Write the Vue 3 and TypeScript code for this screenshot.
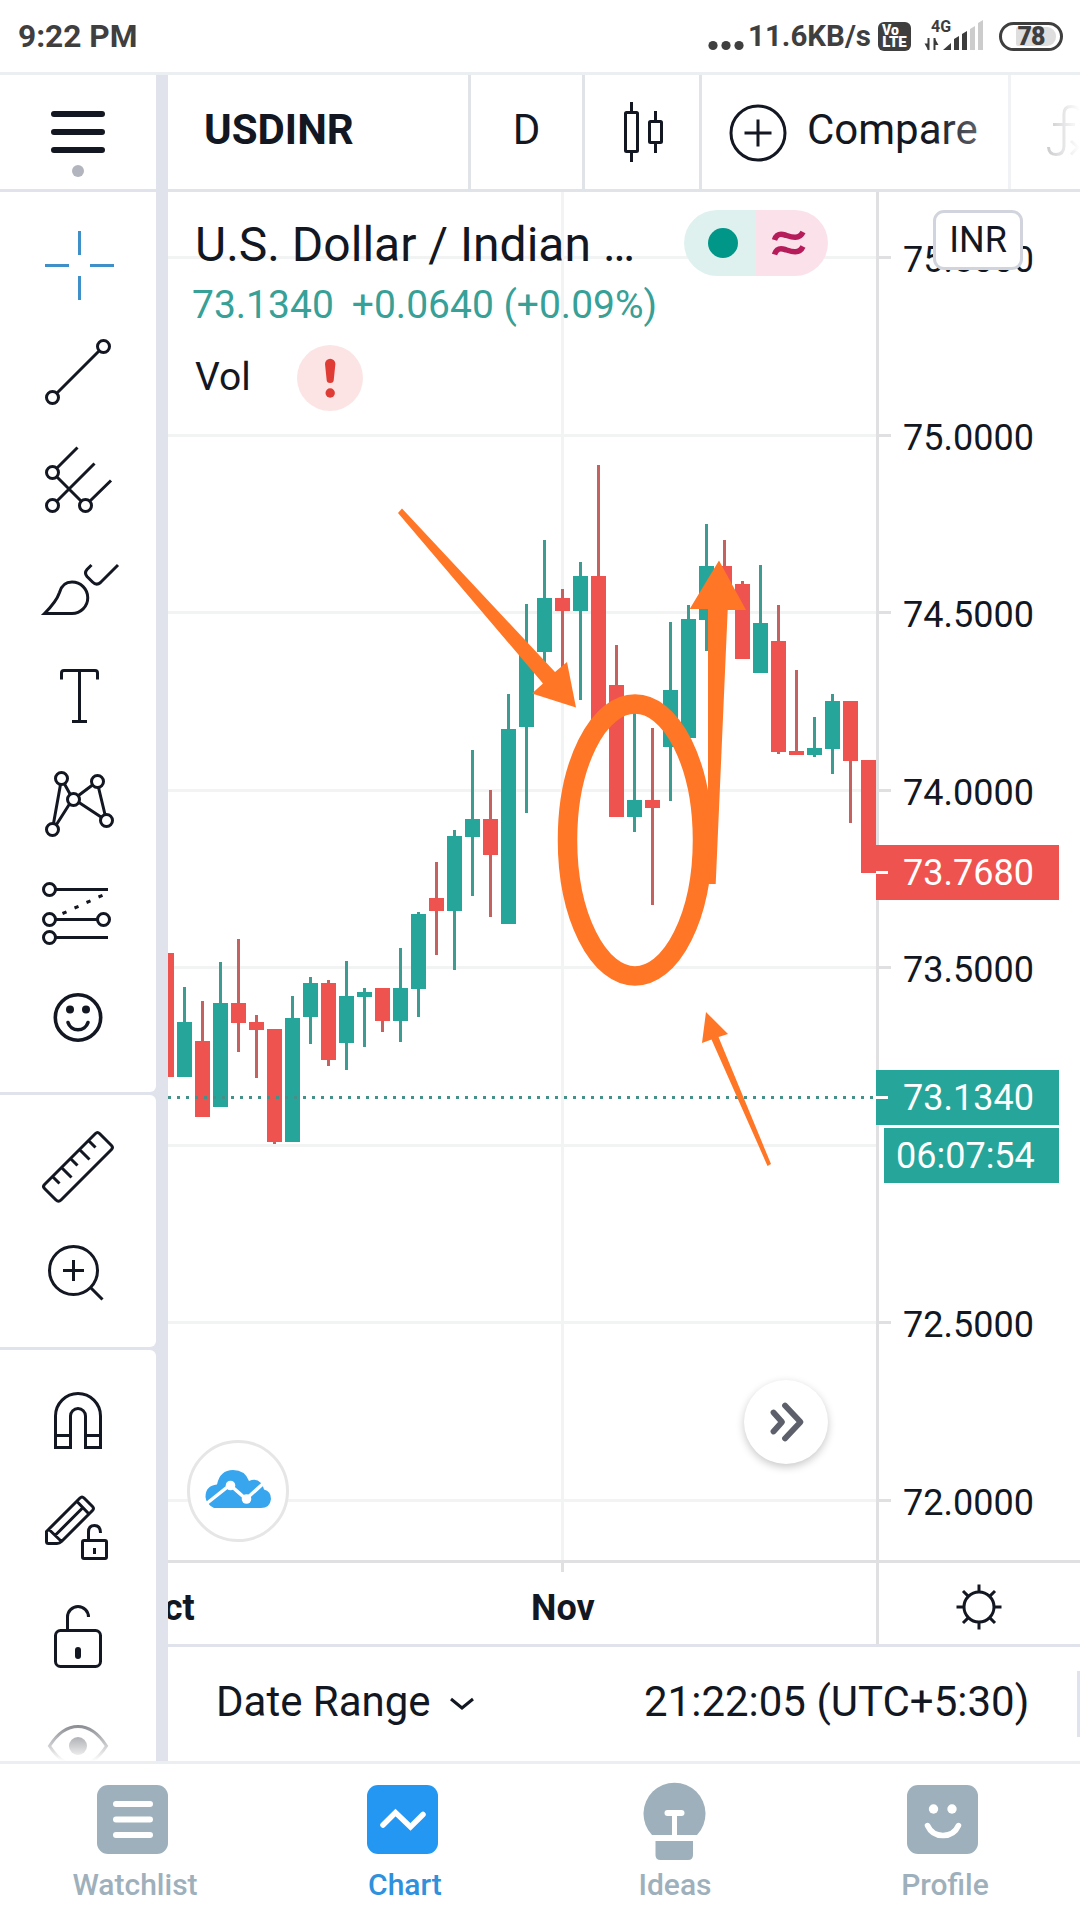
<script setup lang="ts">
type Dir = 'up' | 'down'
interface Candle { x: number; dir: Dir; high: number; top: number; bottom: number; low: number }

// [direction, wick top, body top, body bottom, wick bottom]
const raw: [Dir, number, number, number, number][] = [
  ['down', 953, 953, 1077, 1077], ['up', 987, 1022, 1077, 1077], ['down', 1001, 1041, 1117, 1117],
  ['up', 962, 1003, 1107, 1107], ['down', 939, 1003, 1023, 1052], ['down', 1015, 1022, 1030, 1078],
  ['down', 1029, 1029, 1142, 1144], ['up', 996, 1018, 1142, 1142], ['up', 977, 983, 1017, 1044],
  ['down', 980, 983, 1060, 1066], ['up', 961, 996, 1043, 1070], ['up', 988, 992, 997, 1047],
  ['down', 988, 988, 1021, 1032], ['up', 948, 988, 1021, 1042], ['up', 912, 914, 989, 1017],
  ['down', 862, 898, 911, 955], ['up', 830, 836, 911, 970], ['up', 750, 819, 837, 896],
  ['down', 790, 819, 855, 917], ['up', 694, 729, 924, 924], ['up', 604, 650, 727, 813],
  ['up', 540, 598, 652, 670], ['down', 589, 598, 611, 672], ['up', 562, 576, 611, 700],
  ['down', 465, 576, 724, 724], ['down', 645, 685, 817, 817], ['up', 700, 800, 817, 832],
  ['down', 728, 800, 808, 905], ['up', 622, 690, 747, 801], ['up', 605, 619, 738, 738],
  ['up', 524, 566, 620, 651], ['down', 540, 566, 600, 600], ['down', 581, 584, 659, 659],
  ['up', 565, 623, 673, 673], ['down', 605, 641, 752, 754], ['down', 670, 751, 755, 755],
  ['up', 717, 748, 755, 757], ['up', 694, 701, 749, 774], ['down', 701, 701, 761, 823],
  ['down', 760, 760, 873, 873],
]
const candles: Candle[] = raw.map(([dir, high, top, bottom, low], i) => ({ x: 159 + i * 18, dir, high, top, bottom, low }))

const gridLines = [
  { y: 256, label: '75.5000' }, { y: 434, label: '75.0000' }, { y: 611, label: '74.5000' },
  { y: 789, label: '74.0000' }, { y: 966, label: '73.5000' }, { y: 1144, label: '' },
  { y: 1321, label: '72.5000' }, { y: 1499, label: '72.0000' },
]
</script>

<template>
  <div class="screen">
    <header class="status">
      <span class="clock">9:22 PM</span>
      <div class="status-right">
        <svg class="dots" width="36" height="72" viewBox="0 0 36 72"><circle cx="5" cy="45.5" r="4.6" /><circle cx="18" cy="45.5" r="4.6" /><circle cx="31" cy="45.5" r="4.6" /></svg>
        <span class="speed">11.6KB/s</span>
        <span class="volte"><b>Vo</b><b>LTE</b></span>
        <svg class="signal" width="62" height="72" viewBox="924 0 62 72">
          <text x="931" y="31.5" class="fourg">4G</text>
          <path d="M928.5 38v12M934.5 50V38" stroke="#3c3c3c" stroke-width="2" fill="none" />
          <path d="M924.5 43.500l4 7v-7zM938.500 45l-4-7v7z" fill="#3c3c3c" />
          <path d="M943 50l8-7v7zM954 50V39l5-3v14zM962 50V34l5-3v19z" fill="#3c3c3c" />
          <path d="M970 50V29l5-3v24zM978 50V23l5-3v30z" fill="#ccc" />
        </svg>
        <span class="battery"><i></i><b>78</b></span>
      </div>
    </header>

    <div class="work">
      <aside class="side">
        <div class="menu">
          <svg width="156" height="114" viewBox="0 75 156 114">
            <path d="M54 114h48M54 132h48M54 150h48" stroke="#131722" stroke-width="6" stroke-linecap="round" />
            <circle cx="78" cy="171" r="6" fill="#b2b5be" />
          </svg>
        </div>
        <div class="group">
          <svg class="tool active" viewBox="0 0 156 108"><path d="M45 55.500h24M90 55.500h24M79.500 21v24M79.500 66v24" /></svg>
          <svg class="tool" viewBox="0 0 156 108"><circle cx="52.500" cy="79.500" r="6" /><circle cx="103.500" cy="28.500" r="6" /><path d="M57 75 99 33" /></svg>
          <svg class="tool" viewBox="0 0 156 108"><circle cx="52.500" cy="46.500" r="6" /><circle cx="52.500" cy="79.500" r="6" /><circle cx="85.500" cy="79.500" r="6" /><path d="M57 42 77.500 21.500M57 75 94.500 37.500M90 75 111 54.500M57 51 81 75" /></svg>
          <svg class="tool" viewBox="0 0 156 108"><path d="M44.500 79.500H72A15.700 15.700 0 0 0 72 48C64 48 61 53 59.500 58.500 57 66 51 73 44.500 79.500ZM91.500 31 87 35.500Q84 39 87 42.500L92.500 48Q96.500 52 100.500 48.500L118 31" /></svg>
          <svg class="tool" viewBox="0 0 156 108"><path d="M61.500 37.500V31Q61.500 28.500 64 28.500H95Q97.500 28.500 97.500 31V37.500M79.500 28.500V79.500M72 79.500H87" /></svg>
          <svg class="tool" viewBox="0 0 156 108"><path d="M60.500 34.500 53.500 73.500M64.500 34 70 44M78.500 45.500 92.500 35M98.500 37.500 105 64.500M79 52.500 101 67M69.500 54 56.500 74.500" /><circle cx="61.500" cy="28.500" r="6" /><circle cx="97.500" cy="31.500" r="6" /><circle cx="73.500" cy="49.500" r="6" /><circle cx="52.500" cy="79.500" r="6" /><circle cx="106.500" cy="70.500" r="6" /></svg>
          <svg class="tool" viewBox="0 0 156 108"><circle cx="49.500" cy="31.500" r="6" /><circle cx="49.500" cy="61.500" r="6" /><circle cx="103.500" cy="61.500" r="6" /><circle cx="49.500" cy="79.500" r="6" /><path d="M55.500 31.500H108M55.500 61.500H97.500M55.500 79.500H108M62.500 55.500l4-1.600M74.500 50l4-1.600M86.500 44.500l4-1.600M98.500 39l4-1.600" /></svg>
          <svg class="tool" viewBox="0 0 156 108"><circle cx="78" cy="51.500" r="22.700" stroke-width="3.600" /><circle cx="70" cy="43.500" r="4" class="solid" /><circle cx="86" cy="43.500" r="4" class="solid" /><path d="M68 56.500A10.500 10.500 0 0 0 88 56.500" stroke-width="3.600" stroke-linecap="round" /></svg>
        </div>
        <div class="group">
          <svg class="tool" viewBox="0 0 156 108"><path d="M44.500 71.500 95.500 20.500Q97.500 18.500 99.500 20.500L111.500 32.500Q113.500 34.500 111.500 36.500L61 87Q58.500 89.500 56 87L44.500 75.500Q42.500 73.500 44.500 71.500ZM52.500 63.500l7 7M61.500 54.500l10 10M70.500 45.500l7 7M79.500 36.500l10 10M88.500 27.500l7 7" /></svg>
          <svg class="tool" viewBox="0 0 156 108"><circle cx="73.500" cy="49.500" r="24" /><path d="M63 49.500H84M73.500 39V60M91 67 102.500 78.500" /></svg>
        </div>
        <div class="group last">
          <svg class="tool" viewBox="0 0 156 108"><path d="M55.500 79.500V48A22.500 22.500 0 0 1 100.500 48V79.500H85.500V48A7.500 7.500 0 0 0 70.500 48V79.500ZM55.500 67.500h15M85.500 67.500h15" /></svg>
          <svg class="tool" viewBox="0 0 156 108"><path d="M46.500 55.500 80 22Q82 20 84 22L92.500 30.500Q94.500 32.500 92.500 34.500L61.500 65.500Q59.500 67.500 57 67.500H48.500Q46.500 67.500 46.500 65.500ZM77 25.500 89 38M49 53.500 61.500 65.500M55.500 59 83 31.500" /><rect x="82.500" y="64.500" width="24" height="18" rx="1.500" /><path d="M88.500 64.500V56Q88.500 49.500 94.500 49.500T100.500 57M94.500 72V78" /></svg>
          <svg class="tool" viewBox="0 0 156 108"><rect x="55.500" y="46.500" width="45" height="36" rx="5" /><path d="M67.500 46.500V33A10.500 10.500 0 0 1 88.500 33" /><rect x="75" y="63" width="6" height="12" rx="3" class="solid" /></svg>
          <svg class="tool" viewBox="0 0 156 108"><path d="M49.500 54Q62 34.500 78 34.500T106.500 54Q94 73.500 78 73.500T49.500 54Z" /><circle cx="78" cy="54" r="9" class="solid" /></svg>
          <div class="side-fade"></div>
        </div>
      </aside>

      <main class="main">
        <nav class="toolbar">
          <div class="cell symbol">USDINR</div>
          <div class="cell interval">D</div>
          <div class="cell style">
            <svg width="114" height="114" viewBox="585 75 114 114" fill="none" stroke="#131722" stroke-width="3"><rect x="625.500" y="112.500" width="12" height="39" rx="1" /><path d="M631.500 102v10M631.500 152v10M655.500 111v10M655.500 143v10" /><rect x="649.500" y="121.500" width="12" height="21" rx="1" /></svg>
          </div>
          <div class="cell compare">
            <svg width="58" height="58" viewBox="0 0 58 58" fill="none" stroke="#131722" stroke-width="3"><circle cx="29" cy="29" r="27" /><path d="M15.500 29h27M29 15.500v27" /></svg>
            <span>Compare</span>
          </div>
          <div class="cell fx">
            <svg width="69" height="114" viewBox="1011 75 69 114" fill="none" stroke="#131722" stroke-width="3"><path d="M1048.500 147Q1049 154.500 1056 154.500 1064 154.500 1064 146V114Q1064 106.500 1071 106.500 1077 106.500 1079 110M1053 124.500H1075M1071 141l7 6.500-7 7" /></svg>
          </div>
          <div class="bar-fade"></div>
        </nav>

        <section class="chart">
          <svg class="plot" width="912" height="1368" viewBox="168 192 912 1368">
            <rect v-for="g in gridLines" :key="'g' + g.y" x="168" :y="g.y" width="708" height="3" fill="#f2f4f4" />
            <rect x="561" y="192" width="3" height="1368" fill="#f2f4f4" />
            <g v-for="c in candles" :key="c.x">
              <rect :x="c.x + 6" :y="c.high" width="3" :height="c.low - c.high" :class="['wick', c.dir]" />
              <rect :x="c.x" :y="c.top" width="15" :height="c.bottom - c.top" :class="['body', c.dir]" />
            </g>
            <path d="M168 1097.500H876" stroke="#439189" stroke-width="3" stroke-dasharray="3 6" />
            <rect x="876" y="192" width="3" height="1368" fill="#e0e0e3" />
            <template v-for="g in gridLines" :key="'l' + g.y">
              <rect v-if="g.label" x="879" :y="g.y" width="12" height="3" fill="#e0e0e3" />
              <text v-if="g.label" x="903" :y="g.y + 15.500" class="price">{{ g.label }}</text>
            </template>
            <g fill="#ff7626">
              <path d="M398 513 402 508.500 555 672 567 662 576 707.500 532 693.500 543 683.500Z" />
              <path d="M719 560.500 746 610H727.700L715.700 884H708V609H689.700Z" />
              <path d="M706 1012 728 1034 718.500 1037 771 1164 767.500 1166 711.500 1039.500 702 1043Z" />
              <ellipse cx="635" cy="840" rx="67.500" ry="136" fill="none" stroke="#ff7626" stroke-width="19.500" />
            </g>
            <path d="M876 845H1059V900H876Z" fill="#ef5350" />
            <path d="M876 1070H1059V1125H876ZM884 1128H1059V1183H884Z" fill="#26a69a" />
            <path d="M876 872.500H888M876 1097.500H888" stroke="#fff" stroke-width="3" />
            <g class="tag"><text x="903" y="885" class="price">73.7680</text><text x="903" y="1110" class="price">73.1340</text><text x="896" y="1168" class="price">06:07:54</text></g>
          </svg>

          <div class="legend">
            <div class="row title-row">
              <span class="title">U.S. Dollar / Indian …</span>
              <span class="pill"><i class="open"><em></em></i><i class="delay"><svg width="34" height="26" viewBox="0 0 34 26" fill="none" stroke="#b71c5a" stroke-width="5.500"><path d="M2.500 10C4.500 4 8 3.500 13 5S27 10.500 31 2M2.500 24.500C4.500 18.500 8 18 13 19.500S27 25 31 16.500" /></svg></i></span>
            </div>
            <div class="row values"><span>73.1340</span><span>+0.0640 (+0.09%)</span></div>
            <div class="row vol"><span>Vol</span>
              <svg width="66" height="66" viewBox="0 0 66 66"><circle cx="33" cy="33" r="33" fill="#fce4e4" /><path d="M28 19a5.200 5.200 0 0 1 10.400 0L36.800 34.500a3.600 3.600 0 0 1-7.200 0Z" fill="#e03c36" /><circle cx="33.200" cy="48" r="4.700" fill="#e03c36" /></svg>
            </div>
          </div>
          <div class="currency">INR</div>
          <div class="logo">
            <svg width="68" height="42" viewBox="204 1468 68 42"><path d="M214 1508Q206 1504 205.500 1497 205.500 1485.500 217 1484.500 220 1470 233 1470 245 1470 249 1481 256 1477.500 261 1483 263.500 1487 264 1489.500 271 1491 271 1499 270 1508 261 1508Z" fill="#37a6ef" /><path d="M206 1504 230 1485 246 1499 266 1481" stroke="#fff" stroke-width="3.500" fill="none" /><circle cx="230.500" cy="1485.500" r="4.800" fill="#fff" /><circle cx="246.500" cy="1499" r="4.800" fill="#fff" /></svg>
          </div>
          <div class="scroll">
            <svg width="84" height="84" viewBox="744 1380 84 84" fill="none" stroke="#5d606b" stroke-width="5.800" stroke-linecap="round" stroke-linejoin="round"><path d="M773.500 1412.500 782 1422 773.500 1431.500M785 1405.500 800.500 1422 785 1438.500" /></svg>
          </div>
        </section>

        <section class="time-axis">
          <div class="months">
            <i class="tick"></i>
            <span class="oct">Oct</span><span class="nov">Nov</span>
          </div>
          <div class="gear">
            <svg width="48" height="48" viewBox="-24 -24 48 48" fill="none" stroke="#131722" stroke-width="3"><circle r="15" /><path d="M0-22.500V-15M0 15V22.500M-22.500 0H-15M15 0H22.500M-16-16-10.600-10.600M16-16 10.600-10.600M-16 16-10.600 10.600M16 16 10.600 10.600" /></svg>
          </div>
        </section>

        <section class="range">
          <span class="range-label">Date Range</span>
          <svg width="26" height="14" viewBox="0 0 26 14" fill="none" stroke="#131722" stroke-width="3"><path d="M2 2 13 11 24 2" /></svg>
          <span class="tz">21:22:05 (UTC+5:30)</span>
          <i class="edge"></i>
        </section>
      </main>
    </div>

    <footer class="tabs">
      <div class="tab">
        <svg width="84" height="84" viewBox="91 1780 84 84"><rect x="97" y="1785" width="71" height="69" rx="11" fill="#9eb0bb" /><path d="M116 1804h34M116 1819.500h34M116 1835h34" stroke="#fff" stroke-width="6" stroke-linecap="round" /></svg>
        <span>Watchlist</span>
      </div>
      <div class="tab on">
        <svg width="84" height="84" viewBox="361 1780 84 84"><rect x="367" y="1785" width="71" height="69" rx="11" fill="#2497f3" /><path d="M383 1825 395.500 1812.500 410.500 1827 423 1814.500" stroke="#fff" stroke-width="5.500" stroke-linecap="round" stroke-linejoin="miter" fill="none" /></svg>
        <span>Chart</span>
      </div>
      <div class="tab">
        <svg width="84" height="84" viewBox="631 1780 84 84"><path d="M652 1835A31 31 0 1 1 697 1835Z" fill="#9eb0bb" /><path d="M655.500 1841H693V1855Q693 1860 688 1860H660.500Q655.500 1860 655.500 1855Z" fill="#9eb0bb" /><path d="M667.500 1813H681.500" stroke="#fff" stroke-width="6" stroke-linecap="round" /><path d="M674.500 1813V1838" stroke="#fff" stroke-width="5" /></svg>
        <span>Ideas</span>
      </div>
      <div class="tab">
        <svg width="84" height="84" viewBox="901 1780 84 84"><rect x="907" y="1785" width="71" height="69" rx="11" fill="#9eb0bb" /><circle cx="933.500" cy="1809" r="4.700" fill="#fff" /><circle cx="952" cy="1809" r="4.700" fill="#fff" /><path d="M927.500 1825.500Q932 1835.500 943 1835.500T958.500 1825.500" stroke="#fff" stroke-width="5.500" stroke-linecap="round" fill="none" /></svg>
        <span>Profile</span>
      </div>
    </footer>
  </div>
</template>

<style>
body { margin: 0; background: #fff; }
</style>

<style scoped>
.screen { width: 1080px; height: 1920px; overflow: hidden; background: #fff; color: #131722; font-family: Roboto, "Liberation Sans", sans-serif; display: flex; flex-direction: column; }
svg { display: block; flex: none; }
i, em { font-style: normal; }

.status { height: 72px; border-bottom: 3px solid #eceff1; display: flex; justify-content: space-between; color: #3f3f3f; font-weight: 700; flex: none; }
.clock { padding-left: 18px; font-size: 31.7px; line-height: 74px; }
.status-right { display: flex; align-items: center; padding-right: 17px; }
.dots { fill: #3f3f3f; }
.speed { font-size: 29.5px; line-height: 74px; margin-left: 4px; width: 130px; white-space: nowrap; }
.volte { width: 33px; height: 29px; border-radius: 6px; background: #3f3f3f; color: #fff; display: flex; flex-direction: column; align-items: center; }
.volte b { font-size: 15px; line-height: 13px; }
.volte b:first-child { align-self: flex-start; padding: 2px 0 0 4px; line-height: 12px; font-size: 14px; }
.signal { margin-left: 13px; }
.fourg { font-size: 16px; fill: #3c3c3c; }
.battery { position: relative; box-sizing: border-box; width: 64px; height: 29px; margin-left: 13px; border: 3px solid #3f3f3f; border-radius: 15px; display: flex; align-items: center; justify-content: center; }
.battery i { position: absolute; left: 14px; top: 2px; width: 40px; height: 19px; border-radius: 2px 9px 9px 2px; background: #dedede; }
.battery b { position: relative; font-size: 25px; line-height: 23px; letter-spacing: -1px; }

.work { height: 1686px; display: flex; flex: none; }
.side { width: 156px; padding-right: 12px; background: #e0e3eb; display: flex; flex-direction: column; gap: 3px; flex: none; overflow: hidden; }
.menu { height: 114px; background: #fff; flex: none; }
.group { background: #fff; padding: 18px 0; border-radius: 0 6px 6px 0; flex: none; }
.group:nth-child(2) { border-top-right-radius: 0; }
.group.last { position: relative; height: 393px; padding-bottom: 0; overflow: hidden; border-bottom-right-radius: 0; }
.tool { width: 156px; height: 108px; fill: none; stroke: #131722; stroke-width: 3; }
.tool.active { stroke: #3f90c8; }
.solid { fill: #131722; stroke: none; }
.side-fade { position: absolute; left: 0; right: 0; bottom: 0; height: 72px; background: linear-gradient(rgba(255,255,255,0), #fff); }

.main { width: 912px; display: flex; flex-direction: column; flex: none; }
.toolbar { position: relative; height: 114px; border-bottom: 3px solid #e0e3e8; display: flex; flex: none; font-size: 42px; }
.cell { box-sizing: border-box; border-right: 3px solid #e0e3e8; display: flex; align-items: center; padding-bottom: 5px; flex: none; }
.symbol { width: 303px; padding-left: 36px; font-weight: 700; }
.interval { width: 114px; justify-content: center; }
.style { width: 117px; padding: 0; }
.compare { width: 309px; padding-left: 26.500px; }
.compare svg { margin-top: 7px; }
.compare span { margin-left: 20.500px; }
.fx { width: 69px; border: 0; padding: 0; }
.bar-fade { position: absolute; top: 0; right: 0; width: 150px; height: 114px; background: linear-gradient(90deg, rgba(255,255,255,0), #fff); }

.chart { position: relative; height: 1368px; border-bottom: 3px solid #e0e0e3; flex: none; }
.up.body { fill: #26a69a; }
.down.body { fill: #ef5350; }
.up.wick { fill: #3d9b91; }
.down.wick { fill: #c46260; }
.price { font-size: 36px; fill: #131722; }
.tag .price { fill: #fff; }
.legend { position: absolute; left: 24px; top: 18px; }
.row { display: flex; align-items: center; white-space: nowrap; }
.title-row { height: 66px; }
.title { width: 492px; font-size: 48px; padding-top: 3px; text-indent: 3px; }
.pill { display: flex; width: 144px; height: 66px; border-radius: 33px; overflow: hidden; }
.pill i { width: 72px; display: flex; align-items: center; }
.open { background: #dff1ef; }
.open em { width: 30px; height: 30px; border-radius: 50%; background: #009688; margin-left: 24px; }
.delay { background: #fbe2ea; }
.delay svg { margin-left: 16px; }
.values { height: 57px; gap: 18px; font-size: 39px; color: #37a097; }
.vol { margin-top: 12px; height: 66px; font-size: 39px; }
.vol span { width: 105px; padding: 0 0 2px 3px; box-sizing: border-box; }
.currency { position: absolute; left: 765px; top: 18px; width: 90px; height: 60px; box-sizing: border-box; border: 3px solid #d1d4dc; border-radius: 11px; background: #fff; font-size: 36px; line-height: 54px; text-align: center; }
.logo { position: absolute; left: 19px; top: 1248px; width: 102px; height: 102px; box-sizing: border-box; border: 3px solid #e6e6e6; border-radius: 50%; background: #fff; display: flex; align-items: center; justify-content: center; }
.logo svg { margin-bottom: 4px; }
.scroll { position: absolute; left: 576px; top: 1188px; width: 84px; height: 84px; border-radius: 50%; background: #fff; box-shadow: 0 3px 9px rgba(0,0,0,.22); }

.time-axis { height: 81px; border-bottom: 3px solid #e0e3eb; display: flex; flex: none; font-size: 36px; font-weight: 700; }
.months { position: relative; width: 708px; border-right: 3px solid #e0e0e3; overflow: hidden; line-height: 91px; display: flex; }
.tick { position: absolute; left: 393px; top: 0; width: 3px; height: 9px; background: #e0e0e3; }
.oct { width: 363px; text-indent: -29px; }
.gear { flex: 1; display: flex; align-items: center; justify-content: center; padding: 6px 1px 0 0; }

.range { height: 114px; display: flex; align-items: center; font-size: 42px; flex: none; position: relative; }
.range span { padding-bottom: 6px; white-space: nowrap; }
.range-label { margin-left: 48px; width: 233px; }
.tz { margin-left: 169px; }
.edge { position: absolute; right: 0; top: 24px; width: 3px; height: 66px; background: #e0e3eb; }

.tabs { height: 156px; border-top: 3px solid #eceff1; display: flex; flex: none; }
.tab { width: 270px; padding-top: 16px; box-sizing: border-box; display: flex; flex-direction: column; align-items: center; color: #9eb0bb; font-size: 30px; font-weight: 500; }
.tab svg { margin-right: 5px; }
.tab span { line-height: 36px; margin-top: 3px; }
.tab.on { color: #2f90dc; }
</style>
